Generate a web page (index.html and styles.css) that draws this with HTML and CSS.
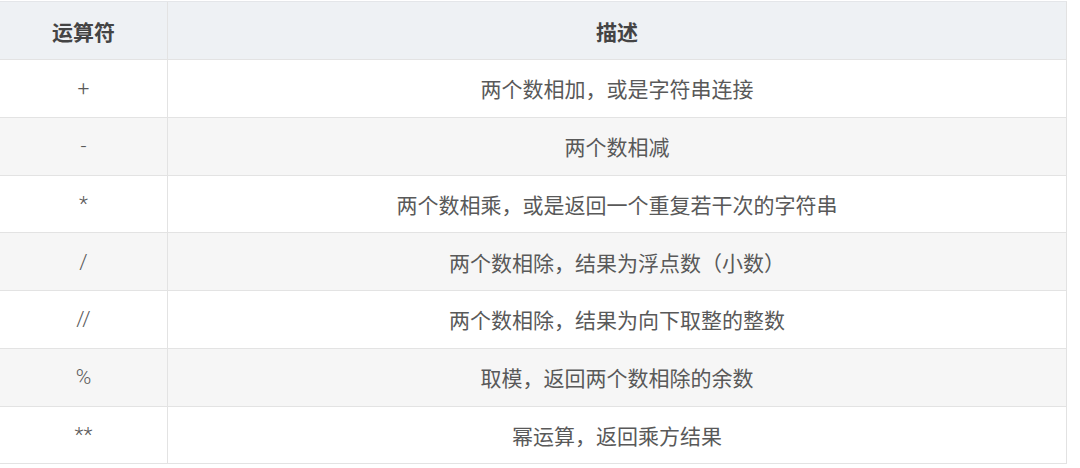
FILE: index.html
```html
<!DOCTYPE html>
<html lang="zh-CN">
<head>
<meta charset="utf-8">
<title>运算符</title>
<link rel="stylesheet" href="styles.css">
</head>
<body>
<div class="table">
  <div class="row head"><div class="cell op">运算符</div><div class="cell desc">描述</div></div>
  <div class="row"><div class="cell op">+</div><div class="cell desc">两个数相加，或是字符串连接</div></div>
  <div class="row alt"><div class="cell op">-</div><div class="cell desc">两个数相减</div></div>
  <div class="row"><div class="cell op">*</div><div class="cell desc">两个数相乘，或是返回一个重复若干次的字符串</div></div>
  <div class="row alt"><div class="cell op">/</div><div class="cell desc">两个数相除，结果为浮点数（小数）</div></div>
  <div class="row"><div class="cell op">//</div><div class="cell desc">两个数相除，结果为向下取整的整数</div></div>
  <div class="row alt"><div class="cell op">%</div><div class="cell desc">取模，返回两个数相除的余数</div></div>
  <div class="row"><div class="cell op">**</div><div class="cell desc">幂运算，返回乘方结果</div></div>
</div>
</body>
</html>
```

FILE: styles.css
```css
html, body {
  margin: 0;
  padding: 0;
  background: #ffffff;
}
body {
  padding-top: 1px;
  font-family: Roboto, "Noto Sans CJK SC", sans-serif;
  font-size: 21px;
  color: #595959;
}
.table {
  width: 1067px;
  border-top: 1px solid #e4e6e9;
  border-right: 1px solid #e2e2e2;
  box-sizing: border-box;
}
.row {
  display: grid;
  grid-template-columns: 168px 1fr;
  height: 57.75px;
  box-sizing: border-box;
  border-bottom: 1px solid #e3e3e3;
  background: #ffffff;
}
.row.alt {
  background: #f6f6f6;
}
.row.head {
  background: #eef1f4;
  font-weight: bold;
  color: #444444;
  height: 58px;
}
.cell {
  display: flex;
  align-items: center;
  justify-content: center;
}
.op {
  font-weight: 300;
  border-right: 1px solid #e3e3e3;
}
.head .op {
  font-weight: bold;
}
```
